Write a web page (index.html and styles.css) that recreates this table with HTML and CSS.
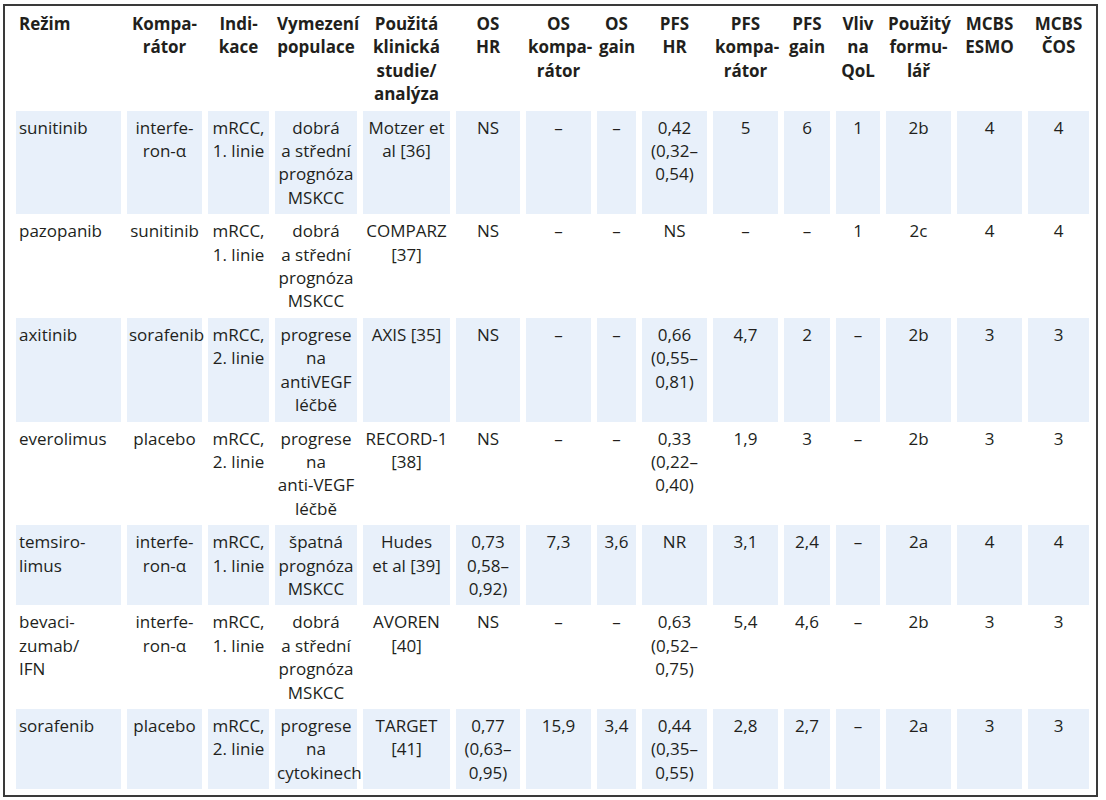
FILE: index.html
```html
<!DOCTYPE html>
<html lang="cs">
<head>
<meta charset="utf-8">
<title>Tabulka</title>
<link rel="stylesheet" href="styles.css">
</head>
<body>
<div class="frame">
<table class="tbl">
<colgroup>
<col class="c1"><col class="c2"><col class="c3"><col class="c4"><col class="c5">
<col class="c6"><col class="c7"><col class="c8"><col class="c9"><col class="c10">
<col class="c11"><col class="c12"><col class="c13"><col class="c14"><col class="c15">
</colgroup>
<thead>
<tr>
<th class="first">Režim</th>
<th>Kompa-<br>rátor</th>
<th>Indi-<br>kace</th>
<th>Vymezení<br>populace</th>
<th>Použitá<br>klinická<br>studie/<br>analýza</th>
<th>OS<br>HR</th>
<th>OS<br>kompa-<br>rátor</th>
<th>OS<br>gain</th>
<th>PFS<br>HR</th>
<th>PFS<br>kompa-<br>rátor</th>
<th>PFS<br>gain</th>
<th>Vliv<br>na<br>QoL</th>
<th>Použitý<br>formu-<br>lář</th>
<th>MCBS<br>ESMO</th>
<th>MCBS<br>ČOS</th>
</tr>
</thead>
<tbody>
<tr class="shade">
<td class="first">sunitinib</td>
<td>interfe-<br>ron-α</td>
<td>mRCC,<br>1. linie</td>
<td>dobrá<br>a střední<br>prognóza<br>MSKCC</td>
<td>Motzer et<br>al [36]</td>
<td>NS</td>
<td>–</td>
<td>–</td>
<td>0,42<br>(0,32–<br>0,54)</td>
<td>5</td>
<td>6</td>
<td>1</td>
<td>2b</td>
<td>4</td>
<td>4</td>
</tr>
<tr>
<td class="first">pazopanib</td>
<td>sunitinib</td>
<td>mRCC,<br>1. linie</td>
<td>dobrá<br>a střední<br>prognóza<br>MSKCC</td>
<td>COMPARZ<br>[37]</td>
<td>NS</td>
<td>–</td>
<td>–</td>
<td>NS</td>
<td>–</td>
<td>–</td>
<td>1</td>
<td>2c</td>
<td>4</td>
<td>4</td>
</tr>
<tr class="shade">
<td class="first">axitinib</td>
<td>sorafenib</td>
<td>mRCC,<br>2. linie</td>
<td>progrese<br>na<br>antiVEGF<br>léčbě</td>
<td>AXIS [35]</td>
<td>NS</td>
<td>–</td>
<td>–</td>
<td>0,66<br>(0,55–<br>0,81)</td>
<td>4,7</td>
<td>2</td>
<td>–</td>
<td>2b</td>
<td>3</td>
<td>3</td>
</tr>
<tr>
<td class="first">everolimus</td>
<td>placebo</td>
<td>mRCC,<br>2. linie</td>
<td>progrese<br>na<br>anti-VEGF<br>léčbě</td>
<td>RECORD-1<br>[38]</td>
<td>NS</td>
<td>–</td>
<td>–</td>
<td>0,33<br>(0,22–<br>0,40)</td>
<td>1,9</td>
<td>3</td>
<td>–</td>
<td>2b</td>
<td>3</td>
<td>3</td>
</tr>
<tr class="shade">
<td class="first">temsiro-<br>limus</td>
<td>interfe-<br>ron-α</td>
<td>mRCC,<br>1. linie</td>
<td>špatná<br>prognóza<br>MSKCC</td>
<td>Hudes<br>et al [39]</td>
<td>0,73<br>0,58–<br>0,92)</td>
<td>7,3</td>
<td>3,6</td>
<td>NR</td>
<td>3,1</td>
<td>2,4</td>
<td>–</td>
<td>2a</td>
<td>4</td>
<td>4</td>
</tr>
<tr>
<td class="first">bevaci-<br>zumab/<br>IFN</td>
<td>interfe-<br>ron-α</td>
<td>mRCC,<br>1. linie</td>
<td>dobrá<br>a střední<br>prognóza<br>MSKCC</td>
<td>AVOREN<br>[40]</td>
<td>NS</td>
<td>–</td>
<td>–</td>
<td>0,63<br>(0,52–<br>0,75)</td>
<td>5,4</td>
<td>4,6</td>
<td>–</td>
<td>2b</td>
<td>3</td>
<td>3</td>
</tr>
<tr class="shade">
<td class="first">sorafenib</td>
<td>placebo</td>
<td>mRCC,<br>2. linie</td>
<td>progrese<br>na<br>cytokinech</td>
<td>TARGET<br>[41]</td>
<td>0,77<br>(0,63–<br>0,95)</td>
<td>15,9</td>
<td>3,4</td>
<td>0,44<br>(0,35–<br>0,55)</td>
<td>2,8</td>
<td>2,7</td>
<td>–</td>
<td>2a</td>
<td>3</td>
<td>3</td>
</tr>
</tbody>
</table>
</div>
</body>
</html>
```

FILE: styles.css
```css
html, body {
  margin: 0;
  padding: 0;
  background: #ffffff;
}

body {
  font-family: "Open Sans", "Noto Sans", "Liberation Sans", sans-serif;
  font-size: 17px;
  color: #221f1c;
}

.frame {
  box-sizing: border-box;
  width: 1095px;
  margin: 4px 0 0 3px;
  border: 2px solid #3a3a3a;
  padding: 0 0 6px 5px;
}

.tbl {
  table-layout: fixed;
  width: 1085px;
  border-collapse: separate;
  border-spacing: 6px 0;
}

.tbl th,
.tbl td {
  box-sizing: border-box;
  vertical-align: top;
  text-align: center;
  white-space: nowrap;
  line-height: 23.4px;
  padding: 5px 2px;
}

.tbl th {
  font-weight: 700;
  padding: 6px 2px 5px;
}

.tbl .first {
  text-align: left;
  padding-left: 3px;
}

.shade td {
  background: #e8f0fa;
}

.c1 { width: 105px; }
.c2 { width: 75px; }
.c3 { width: 61px; }
.c4 { width: 82px; }
.c5 { width: 87px; }
.c6 { width: 64px; }
.c7 { width: 65px; }
.c8 { width: 39px; }
.c9 { width: 65px; }
.c10 { width: 65px; }
.c11 { width: 46px; }
.c12 { width: 44px; }
.c13 { width: 65px; }
.c14 { width: 65px; }
.c15 { width: 61px; }
```
